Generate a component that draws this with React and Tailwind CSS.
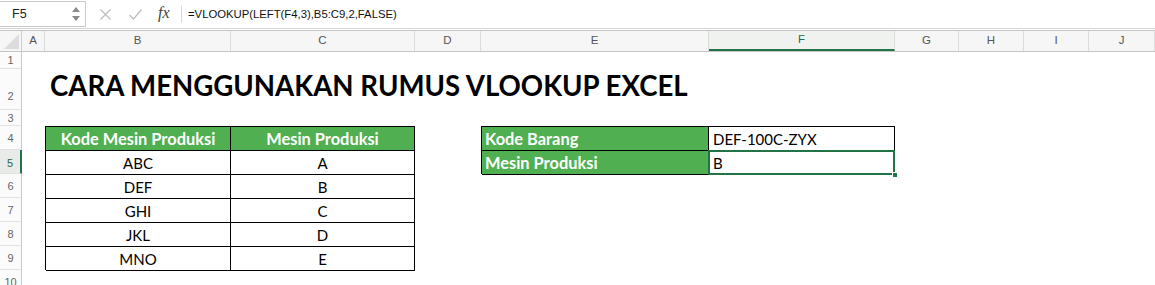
import React from 'react';

const GRID_COLS = 'grid-cols-[22px_23px_186px_184px_66px_228px_186px_64px_65px_65px_66px]';
const LETTERS = ['A', 'B', 'C', 'D', 'E', 'F', 'G', 'H', 'I', 'J'];

const ROW_HEADS = [
  { n: 1, cls: 'row-start-1 items-center' },
  { n: 2, cls: 'row-start-2 items-center pt-[15px]' },
  { n: 3, cls: 'row-start-3 items-center pt-[2px]' },
  { n: 4, cls: 'row-start-4 items-center pt-[2px]' },
  { n: 5, cls: 'row-start-5 items-center pt-[3px]', active: true },
  { n: 6, cls: 'row-start-6 items-center pt-[2px]' },
  { n: 7, cls: 'row-start-7 items-center pt-[2px]' },
  { n: 8, cls: 'row-start-8 items-center pt-[2px]' },
  { n: 9, cls: 'row-start-9 items-center pt-[2px]' },
  { n: 10, cls: 'row-start-10 items-start pt-[4px]' },
];

const machines = [
  ['ABC', 'A'],
  ['DEF', 'B'],
  ['GHI', 'C'],
  ['JKL', 'D'],
  ['MNO', 'E'],
];

const FormulaBar = () => (
  <div className="h-[29px] border-b border-[#d6d6d6] flex items-center">
    <div className="w-[86px] h-[26px] border border-l-0 border-[#cacaca] flex items-center justify-between pl-[12px] pr-[4px]">
      <span className="text-[12.5px] text-[#222]">F5</span>
      <svg width="10" height="16" viewBox="0 0 10 16">
        <path d="M1 6 L5 1 L9 6 Z" fill="#8a8a8a" />
        <path d="M1 10 L5 15 L9 10 Z" fill="#8a8a8a" />
      </svg>
    </div>
    <svg className="ml-[14px]" width="11" height="11" viewBox="0 0 11 11">
      <path d="M0.5 0.5 L10.5 10.5 M10.5 0.5 L0.5 10.5" stroke="#bdbdbd" strokeWidth="1.3" fill="none" />
    </svg>
    <svg className="ml-[18px]" width="13" height="11" viewBox="0 0 13 11">
      <path d="M0.5 6 L4.5 10 L12.5 0.5" stroke="#bdbdbd" strokeWidth="1.3" fill="none" />
    </svg>
    <span className="ml-[16px] w-[16px] text-[16px] italic text-[#444] font-['Liberation_Serif',serif] leading-none pb-[2px]">fx</span>
    <div className="ml-[7px] w-px h-[17px] bg-[#d8d8d8]" />
    <span className="ml-[6px] text-[11.3px] text-[#111]">=VLOOKUP(LEFT(F4,3),B5:C9,2,FALSE)</span>
  </div>
);

const ColumnHeaders = () => (
  <div className={`grid ${GRID_COLS} h-[22px] mt-px border-t border-b border-[#c5c5c5] bg-[#f6f6f6]`}>
    <div className="border-r border-[#cfcfcf] flex items-end justify-end pr-[2px] pb-[2px]">
      <svg width="15" height="15" viewBox="0 0 15 15">
        <path d="M15 0 L15 15 L0 15 Z" fill="#dcdcdc" />
      </svg>
    </div>
    {LETTERS.map((l) => (
      <div
        key={l}
        className={
          l === 'F'
            ? 'flex items-center justify-center text-[11.5px] text-[#2a6a43] bg-[#f0f2f0] border-r border-[#dcdcdc] border-b-2 border-b-[#227447]'
            : 'flex items-center justify-center text-[11.5px] text-[#555] border-r border-[#dcdcdc]'
        }
      >
        {l}
      </div>
    ))}
  </div>
);

const Sheet = () => (
  <div className={`grid ${GRID_COLS} grid-rows-[17px_41px_16px_24px_24px_24px_24px_24px_24px_24px]`}>
    {ROW_HEADS.map((r) => (
      <div
        key={r.n}
        className={
          r.active
            ? `${r.cls} col-start-1 flex justify-center text-[11px] text-[#2a6a43] bg-[#e8ebe8] border-b border-[#e2e2e2] border-r-2 border-r-[#227447]`
            : `${r.cls} col-start-1 flex justify-center text-[11px] text-[#666] bg-[#fbfbfb] border-b border-[#e2e2e2] border-r border-r-[#c9c9c9]`
        }
      >
        {r.n}
      </div>
    ))}

    <div className="row-start-2 col-start-3 col-span-6 flex items-end pl-[5px] pb-[10px]">
      <h1 className="text-[27.6px] leading-none font-bold whitespace-nowrap font-['Lato',sans-serif]">
        CARA MENGGUNAKAN RUMUS VLOOKUP EXCEL
      </h1>
    </div>

    <div className="row-start-4 row-span-6 col-start-3 col-span-2 grid grid-cols-[185px_184px] grid-rows-[24px_24px_24px_24px_24px_24px] border-l border-t border-black font-['Lato',sans-serif] text-[15px]">
      <div className="bg-[#4faf51] text-white text-[16.4px] font-bold flex items-center justify-center border-r border-b border-black pt-[1px]">
        Kode Mesin Produksi
      </div>
      <div className="bg-[#4faf51] text-white text-[16.4px] font-bold flex items-center justify-center border-r border-b border-black pt-[1px]">
        Mesin Produksi
      </div>
      {machines.map(([code, m]) => (
        <React.Fragment key={code}>
          <div className="flex items-center justify-center border-r border-b border-black pt-[2px]">{code}</div>
          <div className="flex items-center justify-center border-r border-b border-black pt-[2px]">{m}</div>
        </React.Fragment>
      ))}
    </div>

    <div className="row-start-4 row-span-2 col-start-6 col-span-2 grid grid-cols-[227px_186px] grid-rows-[24px_24px] border-l border-t border-black font-['Lato',sans-serif] text-[15px]">
      <div className="bg-[#4faf51] text-white text-[16.4px] font-bold flex items-center pl-[3px] border-r border-b border-black pt-[1px]">
        Kode Barang
      </div>
      <div className="flex items-center pl-[4px] border-r border-b border-black pt-[1px]">DEF-100C-ZYX</div>
      <div className="bg-[#4faf51] text-white text-[16.4px] font-bold flex items-center pl-[3px] border-r border-b border-black pt-[1px]">
        Mesin Produksi
      </div>
      <div className="relative flex items-center pl-[4px] border-r border-b border-black pt-[1px]">
        B
        <div className="absolute -left-px -top-px -right-px -bottom-px border-2 border-[#227447]" />
        <div className="absolute -right-[4px] -bottom-[4px] w-[6px] h-[6px] bg-[#227447] border border-white" />
      </div>
    </div>
  </div>
);

export default function App() {
  return (
    <div className="w-[1155px] h-[285px] overflow-hidden bg-white text-black font-['Liberation_Sans',sans-serif]">
      <FormulaBar />
      <ColumnHeaders />
      <Sheet />
    </div>
  );
}
